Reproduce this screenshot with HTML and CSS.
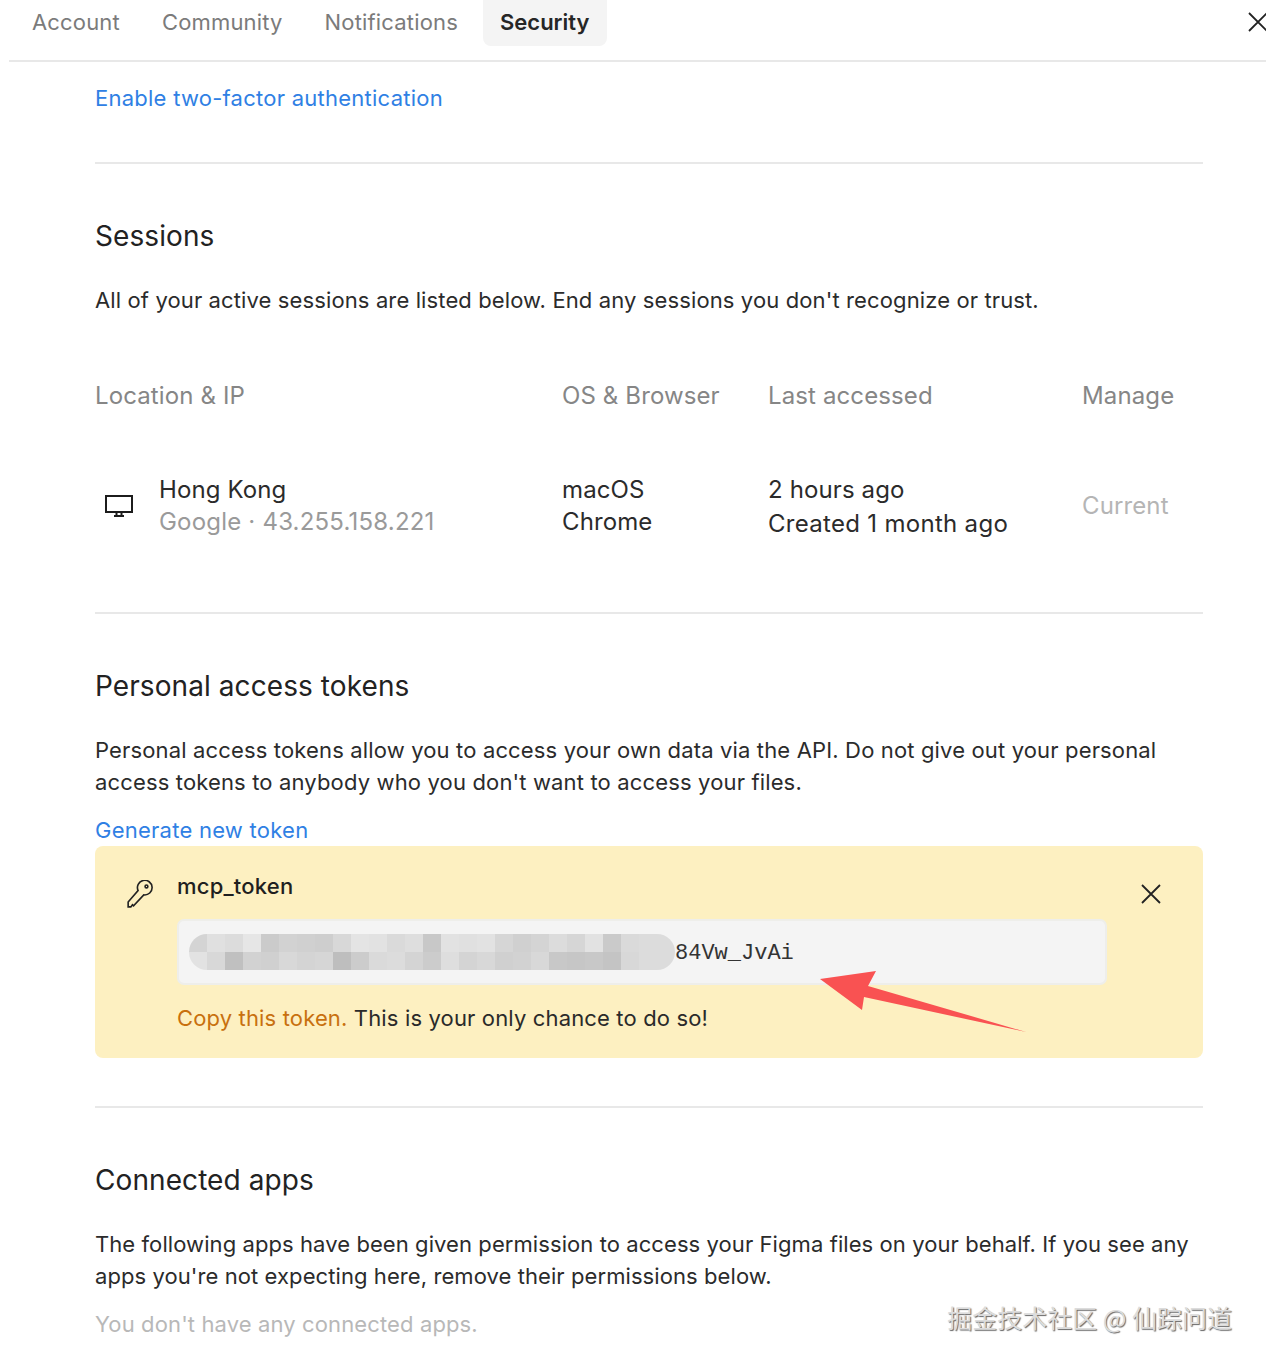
FILE: index.html
```html
<!DOCTYPE html>
<html lang="en">
<head>
<meta charset="utf-8">
<title>Security settings</title>
<link rel="stylesheet" href="styles.css">
</head>
<body>
<header class="tabs">
  <nav class="tab-list">
    <span class="tab">Account</span>
    <span class="tab">Community</span>
    <span class="tab">Notifications</span>
    <span class="tab tab-active">Security</span>
  </nav>
  <svg class="close-main" viewBox="0 0 20 20"><path d="M1 1 19 19M19 1 1 19"/></svg>
</header>
<main class="content">
  <section class="section section-first">
    <a class="link">Enable two-factor authentication</a>
  </section>
  <section class="section">
    <h2 class="heading">Sessions</h2>
    <p class="para">All of your active sessions are listed below. End any sessions you don't recognize or trust.</p>
    <div class="table">
      <div class="th">Location &amp; IP</div>
      <div class="th">OS &amp; Browser</div>
      <div class="th">Last accessed</div>
      <div class="th">Manage</div>
      <div class="cell-loc">
        <svg class="monitor" viewBox="0 0 28 22"><path d="M1 1h26v16H1zM9 21h10M11.500 17v4M16.500 17v4"/></svg>
        <div>
          <div>Hong Kong</div>
          <div class="muted">Google · 43.255.158.221</div>
        </div>
      </div>
      <div>macOS<br>Chrome</div>
      <div>2 hours ago<div class="created">Created 1 month ago</div></div>
      <div class="current">Current</div>
    </div>
  </section>
  <section class="section">
    <h2 class="heading">Personal access tokens</h2>
    <p class="para para-wide">Personal access tokens allow you to access your own data via the API. Do not give out your personal access tokens to anybody who you don't want to access your files.</p>
    <a class="link link-gap">Generate new token</a>
    <div class="token-box">
      <svg class="key" viewBox="0 0 24 26"><path d="M10.200 9.800A6.800 6.800 0 1 1 15.500 13.800L6 24 5 23 3.500 25H1V20.500Z"/><circle cx="18" cy="6" r="1.300"/></svg>
      <div class="token-body">
        <div class="token-name">mcp_token</div>
        <div class="token-field">
          <svg class="blur" viewBox="0 0 486 36" preserveAspectRatio="none">
            <rect x="0" width="18" height="18" fill="#d4d4d4"/><rect x="18" width="18" height="18" fill="#e0e0e0"/><rect x="36" width="18" height="18" fill="#dcdcdc"/><rect x="54" width="18" height="18" fill="#e6e6e6"/><rect x="72" width="18" height="18" fill="#cbcbcb"/><rect x="90" width="18" height="18" fill="#d2d2d2"/><rect x="108" width="18" height="18" fill="#d0d0d0"/><rect x="126" width="18" height="18" fill="#cecece"/><rect x="144" width="18" height="18" fill="#d8d8d8"/><rect x="162" width="18" height="18" fill="#e4e4e4"/><rect x="180" width="18" height="18" fill="#e2e2e2"/><rect x="198" width="18" height="18" fill="#dadada"/><rect x="216" width="18" height="18" fill="#dedede"/><rect x="234" width="18" height="18" fill="#c8c8c8"/><rect x="252" width="18" height="18" fill="#e2e2e2"/><rect x="270" width="18" height="18" fill="#e0e0e0"/><rect x="288" width="18" height="18" fill="#e2e2e2"/><rect x="306" width="18" height="18" fill="#d6d6d6"/><rect x="324" width="18" height="18" fill="#d0d0d0"/><rect x="342" width="18" height="18" fill="#d4d4d4"/><rect x="360" width="18" height="18" fill="#dcdcdc"/><rect x="378" width="18" height="18" fill="#d6d6d6"/><rect x="396" width="18" height="18" fill="#e2e2e2"/><rect x="414" width="18" height="18" fill="#cacaca"/><rect x="432" width="18" height="18" fill="#dadada"/><rect x="450" width="36" height="18" fill="#dcdcdc"/>
            <rect x="0" y="18" width="18" height="18" fill="#e2e2e2"/><rect x="18" y="18" width="18" height="18" fill="#d8d8d8"/><rect x="36" y="18" width="18" height="18" fill="#c0c0c0"/><rect x="54" y="18" width="18" height="18" fill="#d2d2d2"/><rect x="72" y="18" width="18" height="18" fill="#d0d0d0"/><rect x="90" y="18" width="18" height="18" fill="#d8d8d8"/><rect x="108" y="18" width="18" height="18" fill="#d4d4d4"/><rect x="126" y="18" width="18" height="18" fill="#d6d6d6"/><rect x="144" y="18" width="18" height="18" fill="#bebebe"/><rect x="162" y="18" width="18" height="18" fill="#cccccc"/><rect x="180" y="18" width="18" height="18" fill="#dadada"/><rect x="198" y="18" width="18" height="18" fill="#dcdcdc"/><rect x="216" y="18" width="18" height="18" fill="#d4d4d4"/><rect x="234" y="18" width="18" height="18" fill="#cccccc"/><rect x="252" y="18" width="18" height="18" fill="#dedede"/><rect x="270" y="18" width="18" height="18" fill="#d4d4d4"/><rect x="288" y="18" width="18" height="18" fill="#d8d8d8"/><rect x="306" y="18" width="18" height="18" fill="#d0d0d0"/><rect x="324" y="18" width="18" height="18" fill="#d2d2d2"/><rect x="342" y="18" width="18" height="18" fill="#d8d8d8"/><rect x="360" y="18" width="18" height="18" fill="#c8c8c8"/><rect x="378" y="18" width="18" height="18" fill="#c6c6c6"/><rect x="396" y="18" width="18" height="18" fill="#c8c8c8"/><rect x="414" y="18" width="18" height="18" fill="#c4c4c4"/><rect x="432" y="18" width="18" height="18" fill="#d8d8d8"/><rect x="450" y="18" width="36" height="18" fill="#dcdcdc"/>
          </svg>
          <span class="token-tail">84Vw_JvAi</span>
        </div>
        <p class="token-warn"><span class="warn-strong">Copy this token.</span> This is your only chance to do so!</p>
      </div>
      <svg class="close-token" viewBox="0 0 20 20"><path d="M1 1 19 19M19 1 1 19"/></svg>
      <svg class="arrow" viewBox="0 0 210 70"><polygon points="2,11 58,3 50,18 208,64 46,29 44,42"/></svg>
    </div>
  </section>
  <section class="section section-last">
    <h2 class="heading">Connected apps</h2>
    <p class="para para-tight">The following apps have been given permission to access your Figma files on your behalf. If you see any apps you're not expecting here, remove their permissions below.</p>
    <p class="none">You don't have any connected apps.</p>
  </section>
</main>
<div class="watermark">掘金技术社区 @ 仙踪问道</div>
</body>
</html>
```

FILE: styles.css
```css
* { box-sizing: border-box; }
html, body { margin: 0; padding: 0; }
body {
  position: relative;
  width: 1266px;
  height: 1366px;
  overflow: hidden;
  background: #fff;
  color: #2b2b2b;
  font-family: Inter, "Liberation Sans", sans-serif;
  font-size: 22px;
  line-height: 32px;
  letter-spacing: 0.12px;
}
.tabs {
  display: flex;
  justify-content: space-between;
  align-items: flex-start;
  height: 62px;
  margin-left: 9px;
  border-bottom: 2px solid #e8e8e8;
}
.tab-list { display: flex; margin-left: 6px; gap: 8px; }
.tab {
  height: 46px;
  padding: 6px 17px 0;
  color: #7b7b7b;
  letter-spacing: 0.17px;
  border-radius: 0 0 8px 8px;
}
.tab-active { background: #f4f4f4; color: #262626; font-weight: 600; letter-spacing: 0; }
.close-main {
  width: 20px;
  height: 20px;
  margin-top: 12px;
  margin-right: -2px;
  fill: none;
  stroke: #222;
  stroke-width: 1.800;
}
.content { padding: 0 63px 0 95px; }
.section { padding-top: 54px; padding-bottom: 72px; border-bottom: 2px solid #e8e8e8; }
.section-first { padding-top: 20px; padding-bottom: 48px; }
.section-last { border-bottom: 0; padding-bottom: 0; }
.section:nth-child(3) { padding-bottom: 48px; }
.link { display: block; color: #2f80e4; letter-spacing: 0.25px; }
.link-gap { margin-top: 16px; }
.heading { margin: 0; font-size: 28px; line-height: 36px; font-weight: 400; color: #222; letter-spacing: 0.08px; }
.para { margin: 30px 0 0; }
.para-wide { letter-spacing: 0.15px; }
.para-tight { letter-spacing: 0.08px; }
.table {
  display: grid;
  grid-template-columns: 467px 206px 314px 1fr;
  row-gap: 62px;
  margin-top: 64px;
  align-items: start;
  font-size: 24px;
}
.th { color: #868686; }
.cell-loc { display: flex; align-items: center; gap: 26px; padding-left: 10px; }
.monitor { width: 28px; height: 22px; fill: none; stroke: #1c1c1c; stroke-width: 2; }
.muted { color: #9a9a9a; letter-spacing: 0.2px; }
.created { margin-top: 2px; letter-spacing: 0.3px; }
.current { align-self: center; margin-bottom: 2px; color: #b5b5b5; }
.token-box {
  position: relative;
  display: flex;
  height: 212px;
  padding: 24px 0 24px 32px;
  background: #fdf0c1;
  border-radius: 8px;
}
.key { width: 26px; height: 28px; margin-top: 10px; margin-right: 24px; fill: none; stroke: #222; stroke-width: 1.500; flex: none; }
.token-body { width: 930px; flex: none; }
.token-name { font-weight: 500; color: #1f1f1f; letter-spacing: 0.2px; }
.token-field {
  display: flex;
  align-items: center;
  height: 66px;
  margin-top: 17px;
  padding-left: 10px;
  background: #f4f4f4;
  border: 2px solid #eeeeea;
  border-radius: 7px;
}
.blur { width: 486px; height: 36px; border-radius: 18px; flex: none; }
.token-tail { margin-top: 3px; font-family: "Liberation Mono", monospace; font-size: 22px; letter-spacing: 0; color: #333; }
.token-warn { margin: 17px 0 0; color: #2a2a2a; letter-spacing: 0.15px; }
.warn-strong { color: #c8700f; }
.close-token {
  width: 20px;
  height: 20px;
  margin-top: 14px;
  margin-left: 34px;
  fill: none;
  stroke: #222;
  stroke-width: 1.800;
  flex: none;
}
.arrow {
  position: absolute;
  left: 723px;
  top: 122px;
  width: 210px;
  height: 70px;
  fill: #f95252;
}
.none { margin: 16px 0 0; color: #b8b8b8; }
.watermark {
  position: absolute;
  right: 34px;
  top: 1299px;
  font-family: "Noto Sans CJK SC", sans-serif;
  font-size: 25px;
  line-height: 36px;
  letter-spacing: 0;
  color: #dcdcdc;
  text-shadow: 1px 1px 1px #666;
}
```
